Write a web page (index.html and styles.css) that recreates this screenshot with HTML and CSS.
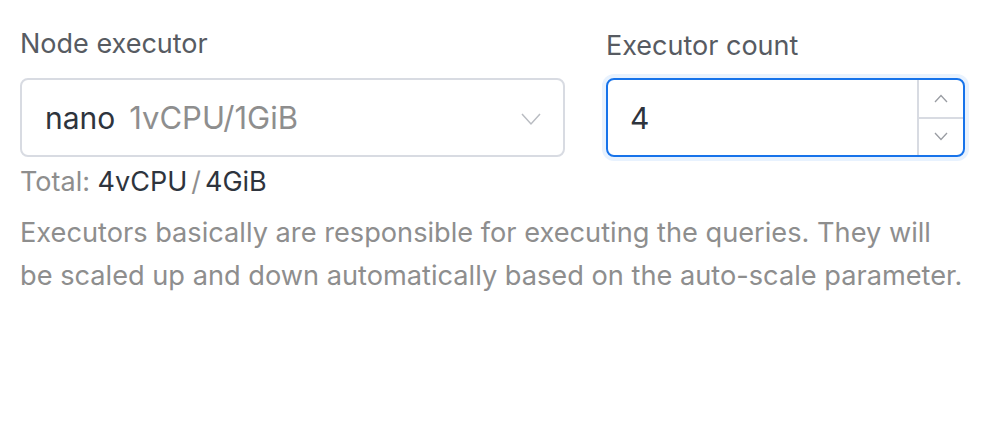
FILE: index.html
```html
<!DOCTYPE html>
<html>
<head>
<meta charset="utf-8">
<link rel="stylesheet" href="styles.css">
</head>
<body>
<div class="form">
  <div class="row">
    <div class="field field-left">
      <label class="label">Node executor</label>
      <div class="select">
        <span class="sel-name">nano</span>
        <span class="sel-spec">1vCPU/1GiB</span>
        <svg class="sel-arrow" width="20" height="14" viewBox="0 0 20 14"><path d="M1 2 L10 12 L19 2" fill="none" stroke="#b9bcc2" stroke-width="1.5"/></svg>
      </div>
      <div class="total"><span class="total-k">Total:</span> 4vCPU<span class="slash">/</span>4GiB</div>
    </div>
    <div class="field field-right">
      <label class="label label-r">Executor count</label>
      <div class="number">
        <div class="num-value">4</div>
        <div class="handlers">
          <div class="handler"><svg width="14" height="9" viewBox="0 0 14 9"><path d="M1 8 L7 1.5 L13 8" fill="none" stroke="#9a9da3" stroke-width="1.3"/></svg></div>
          <div class="handler handler-down"><svg width="14" height="9" viewBox="0 0 14 9"><path d="M1 1 L7 7.5 L13 1" fill="none" stroke="#9a9da3" stroke-width="1.3"/></svg></div>
        </div>
      </div>
    </div>
  </div>
  <p class="help">Executors basically are responsible for executing the queries. They will<br>be scaled up and down automatically based on the auto-scale parameter.</p>
</div>
</body>
</html>
```
FILE: styles.css
```css
html, body {
  margin: 0;
  padding: 0;
  background: #ffffff;
}
body {
  font-family: Inter, "Liberation Sans", sans-serif;
  font-size: 27px;
  color: #333a44;
}
.form {
  padding: 27px 25px 0 20px;
}
.row {
  display: grid;
  grid-template-columns: 545px 359px;
  column-gap: 41px;
}
.label {
  display: block;
  color: #575b62;
  font-size: 27px;
  line-height: 34px;
  height: 34px;
  margin-bottom: 17px;
}
.label-r {
  margin-top: 2px;
  margin-bottom: 15px;
}
.select {
  box-sizing: border-box;
  height: 79px;
  border: 2px solid #d8dbe2;
  border-radius: 8px;
  display: flex;
  align-items: center;
  padding: 0 22px 0 23px;
}
.sel-name {
  color: #2e343d;
  font-size: 30px;
}
.sel-spec {
  color: #8e8e8e;
  font-size: 31px;
  margin-left: 14px;
}
.sel-arrow {
  margin-left: auto;
  margin-top: 2px;
}
.total {
  color: #2e343d;
  font-size: 27px;
  line-height: 34px;
  margin-top: 8px;
}
.total-k {
  color: #8e8e8e;
}
.slash {
  color: #8e8e8e;
  margin: 0 4px;
}
.number {
  box-sizing: border-box;
  height: 79px;
  border: 2px solid #1773ea;
  border-radius: 8px;
  box-shadow: 0 0 0 4px #e8f2fe;
  display: flex;
  overflow: hidden;
}
.num-value {
  flex: 1;
  display: flex;
  align-items: center;
  padding-left: 22px;
  font-size: 30px;
  color: #2e343d;
}
.handlers {
  width: 44px;
  border-left: 2px solid #d8dbe2;
  display: flex;
  flex-direction: column;
}
.handler {
  flex: 1;
  display: flex;
  align-items: center;
  justify-content: center;
}
.handler-down {
  border-top: 2px solid #d8dbe2;
}
.help {
  margin: 12px 0 0 0;
  color: #8e8e8e;
  font-size: 27.2px;
  line-height: 43px;
  white-space: nowrap;
}
```
